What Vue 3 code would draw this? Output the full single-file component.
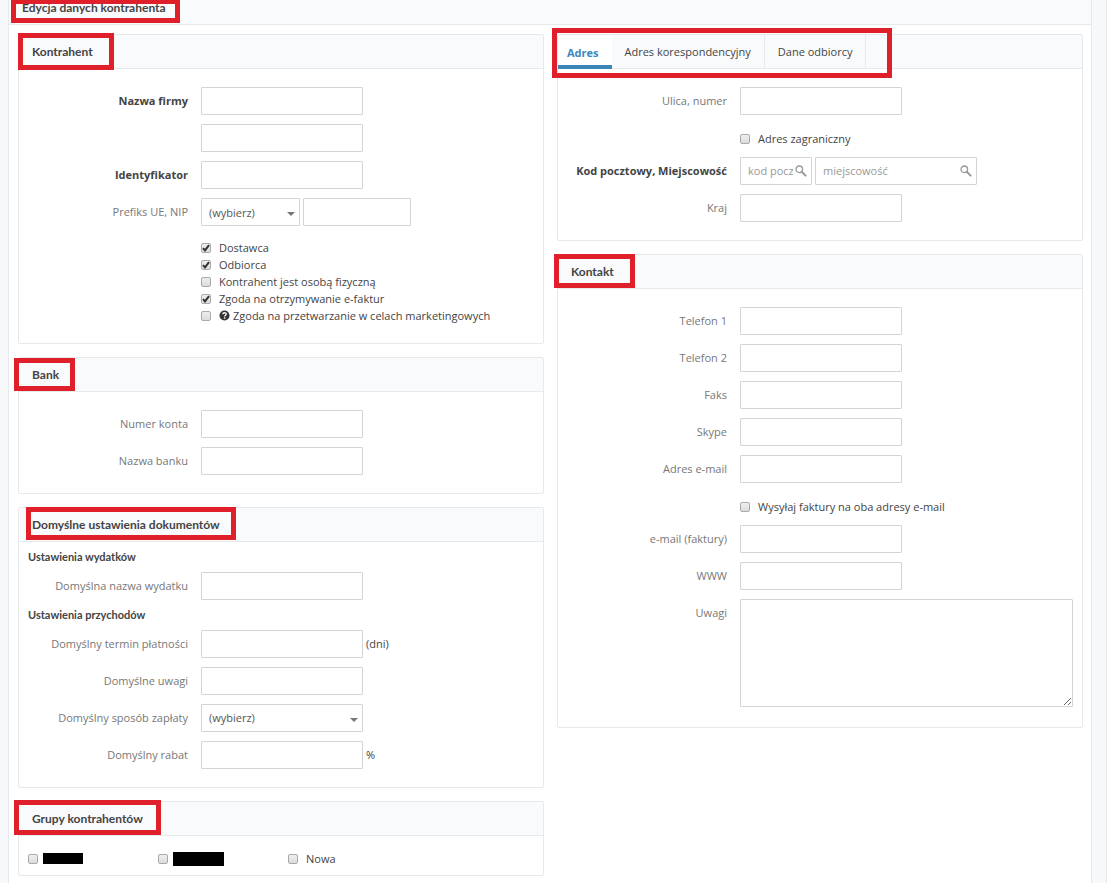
<template>
  <div class="page">
    <main class="window">
      <header class="window-header">
        <h1 class="window-title">Edycja danych kontrahenta</h1>
        <span class="mark mark-title"></span>
      </header>

      <form class="columns" @submit.prevent>
        <div class="column">
          <section class="panel">
            <header class="panel-header">
              <h2>Kontrahent</h2>
              <span class="mark mark-kontrahent"></span>
            </header>
            <div class="panel-body">
              <div class="row">
                <label class="label required" for="name1">Nazwa firmy</label>
                <input id="name1" v-model="form.name1" class="field" type="text">
              </div>
              <div class="row">
                <span class="label"></span>
                <input v-model="form.name2" class="field" type="text" aria-label="Nazwa firmy">
              </div>
              <div class="row">
                <label class="label required" for="identifier">Identyfikator</label>
                <input id="identifier" v-model="form.identifier" class="field" type="text">
              </div>
              <div class="row">
                <label class="label" for="prefix">Prefiks UE, NIP</label>
                <div class="group">
                  <select id="prefix" v-model="form.prefix" class="field select-small">
                    <option value="">(wybierz)</option>
                  </select>
                  <input v-model="form.nip" class="field nip" type="text" aria-label="NIP">
                </div>
              </div>
              <div class="row check-row">
                <span class="label"></span>
                <div class="checks">
                  <label v-for="flag in flags" :key="flag.label" class="check">
                    <input v-model="flag.checked" type="checkbox">
                    <svg v-if="flag.help" class="help" viewBox="0 0 12 12" aria-hidden="true">
                      <circle cx="6" cy="6" r="5.5" fill="#333" />
                      <path d="M4.2 4.6C4.3 2.4 7.9 2.4 7.9 4.5C7.9 5.7 6.1 5.7 6.1 7.1" fill="none" stroke="#fff" stroke-width="1.5" />
                      <rect x="5.3" y="8" width="1.6" height="1.5" fill="#fff" />
                    </svg>
                    <span>{{ flag.label }}</span>
                  </label>
                </div>
              </div>
            </div>
          </section>

          <section class="panel">
            <header class="panel-header">
              <h2>Bank</h2>
              <span class="mark mark-bank"></span>
            </header>
            <div class="panel-body">
              <div class="row">
                <label class="label" for="account">Numer konta</label>
                <input id="account" v-model="form.account" class="field" type="text">
              </div>
              <div class="row">
                <label class="label" for="bank">Nazwa banku</label>
                <input id="bank" v-model="form.bank" class="field" type="text">
              </div>
            </div>
          </section>

          <section class="panel">
            <header class="panel-header">
              <h2>Domyślne ustawienia dokumentów</h2>
              <span class="mark mark-defaults"></span>
            </header>
            <h3>Ustawienia wydatków</h3>
            <div class="row">
              <label class="label" for="expense">Domyślna nazwa wydatku</label>
              <input id="expense" v-model="form.expense" class="field" type="text">
            </div>
            <h3>Ustawienia przychodów</h3>
            <div class="panel-body no-top">
              <div class="row">
                <label class="label" for="term">Domyślny termin płatności</label>
                <div class="group">
                  <input id="term" v-model="form.term" class="field" type="text">
                  <span>(dni)</span>
                </div>
              </div>
              <div class="row">
                <label class="label" for="defaultNotes">Domyślne uwagi</label>
                <input id="defaultNotes" v-model="form.defaultNotes" class="field" type="text">
              </div>
              <div class="row">
                <label class="label" for="payment">Domyślny sposób zapłaty</label>
                <select id="payment" v-model="form.payment" class="field">
                  <option value="">(wybierz)</option>
                </select>
              </div>
              <div class="row">
                <label class="label" for="discount">Domyślny rabat</label>
                <div class="group">
                  <input id="discount" v-model="form.discount" class="field" type="text">
                  <span>%</span>
                </div>
              </div>
            </div>
          </section>

          <section class="panel">
            <header class="panel-header">
              <h2>Grupy kontrahentów</h2>
              <span class="mark mark-groups"></span>
            </header>
            <div class="groups">
              <label class="check hidden-name">
                <input v-model="groups" type="checkbox" value="1" aria-label="Grupa 1">
                <span class="redacted"></span>
              </label>
              <label class="check hidden-name">
                <input v-model="groups" type="checkbox" value="2" aria-label="Grupa 2">
                <span class="redacted large"></span>
              </label>
              <label class="check">
                <input v-model="groups" type="checkbox" value="3">
                <span>Nowa</span>
              </label>
            </div>
          </section>
        </div>

        <div class="column">
          <section class="panel">
            <header class="panel-header tabs">
              <button
                v-for="tab in tabs"
                :key="tab"
                type="button"
                class="tab"
                :class="{ active: tab === activeTab }"
                @click="activeTab = tab"
              >{{ tab }}</button>
              <span class="mark mark-tabs"></span>
            </header>
            <div class="panel-body">
              <div class="row">
                <label class="label" for="street">Ulica, numer</label>
                <input id="street" v-model="form.street" class="field" type="text">
              </div>
              <div class="row single-check">
                <span class="label"></span>
                <label class="check">
                  <input v-model="form.foreign" type="checkbox">
                  <span>Adres zagraniczny</span>
                </label>
              </div>
              <div class="row">
                <label class="label required" for="zip">Kod pocztowy, Miejscowość</label>
                <div class="group">
                  <div v-for="item in lookups" :key="item.id" class="lookup">
                    <input
                      :id="item.id"
                      v-model="form[item.id]"
                      class="field"
                      :class="item.id"
                      type="text"
                      :placeholder="item.placeholder"
                      :aria-label="item.name"
                    >
                    <svg class="search" viewBox="0 0 12 12" aria-hidden="true">
                      <circle cx="4.3" cy="4.3" r="3.3" fill="none" stroke="#999" stroke-width="1.3" />
                      <path d="M6.8 6.8L10.6 10.6" stroke="#999" stroke-width="2" stroke-linecap="round" />
                    </svg>
                  </div>
                </div>
              </div>
              <div class="row">
                <label class="label" for="country">Kraj</label>
                <input id="country" v-model="form.country" class="field" type="text">
              </div>
            </div>
          </section>

          <section class="panel">
            <header class="panel-header">
              <h2>Kontakt</h2>
              <span class="mark mark-contact"></span>
            </header>
            <div class="panel-body">
              <div v-for="item in contacts" :key="item.id" class="row">
                <label class="label" :for="item.id">{{ item.label }}</label>
                <input :id="item.id" v-model="form[item.id]" class="field" type="text">
              </div>
              <div class="row single-check">
                <span class="label"></span>
                <label class="check">
                  <input v-model="form.sendBoth" type="checkbox">
                  <span>Wysyłaj faktury na oba adresy e-mail</span>
                </label>
              </div>
              <div class="row">
                <label class="label" for="invoiceEmail">e-mail (faktury)</label>
                <input id="invoiceEmail" v-model="form.invoiceEmail" class="field" type="text">
              </div>
              <div class="row">
                <label class="label" for="www">WWW</label>
                <input id="www" v-model="form.www" class="field" type="text">
              </div>
              <div class="row">
                <label class="label" for="notes">Uwagi</label>
                <textarea id="notes" v-model="form.notes" class="field notes"></textarea>
              </div>
            </div>
          </section>
        </div>
      </form>
    </main>
  </div>
</template>

<script setup>
import { reactive, ref } from 'vue';

const tabs = ['Adres', 'Adres korespondencyjny', 'Dane odbiorcy'];
const activeTab = ref('Adres');
const groups = ref([]);

const form = reactive({
  prefix: '',
  payment: '',
  foreign: false,
  sendBoth: false
});

const flags = reactive([
  { label: 'Dostawca', checked: true },
  { label: 'Odbiorca', checked: true },
  { label: 'Kontrahent jest osobą fizyczną', checked: false },
  { label: 'Zgoda na otrzymywanie e-faktur', checked: true },
  { label: 'Zgoda na przetwarzanie w celach marketingowych', checked: false, help: true }
]);

const lookups = [
  { id: 'zip', placeholder: 'kod pocztowy', name: 'Kod pocztowy' },
  { id: 'city', placeholder: 'miejscowość', name: 'Miejscowość' }
];

const contacts = [
  { id: 'phone1', label: 'Telefon 1' },
  { id: 'phone2', label: 'Telefon 2' },
  { id: 'fax', label: 'Faks' },
  { id: 'skype', label: 'Skype' },
  { id: 'email', label: 'Adres e-mail' }
];
</script>

<style>
body {
  margin: 0;
  background: #f6f8fa;
}
</style>

<style scoped>
* {
  box-sizing: border-box;
}
.page {
  min-height: 100vh;
  display: flex;
  padding: 0 14px 0 8px;
  border-right: 1px solid #e7eaec;
  font-family: "Open Sans", sans-serif;
  font-size: 11px;
  line-height: 17px;
  color: #444;
}
.window {
  flex: 1;
  min-width: 0;
  background: #fff;
  border: solid #e7eaec;
  border-width: 0 1px;
}
.window-header {
  position: relative;
  height: 25px;
  padding-left: 13px;
  background: #f9fafc;
  border-bottom: 1px solid #e7eaec;
}
h1, h2, h3 {
  margin: 0;
  font-family: Lato, "Open Sans", sans-serif;
  font-size: 12px;
  font-weight: 700;
  color: #444;
}
.window-title {
  line-height: 16px;
}
.columns {
  display: grid;
  grid-template-columns: 1fr 1fr;
  gap: 13px;
  padding: 9px 8px 7px 9px;
}
.column {
  min-width: 0;
  display: flex;
  flex-direction: column;
  gap: 13px;
}
.panel {
  border: 1px solid #e7eaec;
  border-radius: 2px;
}
.panel-header {
  position: relative;
  height: 34px;
  background: #f9fafc;
  border-bottom: 1px solid #e7eaec;
}
h2 {
  padding-left: 13px;
  line-height: 33px;
}
h3 {
  padding-left: 9px;
  font-size: 11px;
  line-height: 30px;
}
.panel-body {
  display: flex;
  flex-direction: column;
  gap: 9px;
  padding: 18px 0;
}
.panel-body.no-top {
  padding-top: 0;
}
.row {
  display: flex;
  gap: 13px;
  padding-right: 9px;
}
.label {
  flex: 0 0 169px;
  line-height: 28px;
  text-align: right;
  color: #777;
}
.label.required {
  font-weight: 700;
  color: #444;
}
.field {
  display: block;
  width: 162px;
  height: 28px;
  margin: 0;
  padding: 0 7px;
  border: 1px solid #d2d4d6;
  border-radius: 1px;
  background: #fff;
  font: inherit;
  color: #555;
  outline: none;
}
.field:focus {
  border-color: #3a87c0;
}
.field::placeholder {
  color: #999;
  opacity: 1;
}
select.field {
  appearance: none;
  padding-bottom: 2px;
  background: #fff url("data:image/svg+xml,%3Csvg xmlns='http://www.w3.org/2000/svg' width='8' height='4'%3E%3Cpath d='M0 0h8L4 4z' fill='%23777'/%3E%3C/svg%3E") no-repeat right 4px top 13px;
}
.group {
  display: flex;
  gap: 3px;
  line-height: 28px;
}
.field.select-small {
  width: 99px;
}
.field.nip {
  width: 108px;
}
.lookup {
  position: relative;
}
.lookup .field {
  padding-right: 18px;
}
.field.zip {
  width: 72px;
}
.search {
  position: absolute;
  top: 8px;
  right: 5px;
  width: 12px;
  height: 12px;
}
.field.notes {
  flex: 1;
  width: auto;
  height: 108px;
  margin-bottom: 2px;
  resize: vertical;
}
.check-row {
  margin-top: 4px;
  padding-bottom: 1px;
}
.check-row .label,
.single-check .label {
  line-height: 17px;
}
.single-check {
  margin-top: 6px;
  height: 18px;
}
.check {
  display: flex;
  align-items: center;
  height: 17px;
}
.check input {
  appearance: none;
  width: 10px;
  height: 10px;
  margin: 0 8px 0 0;
  border: 1px solid #aaa;
  border-radius: 2px;
  background: linear-gradient(#eee, #dcdcdc);
}
.check input:checked {
  background: url("data:image/svg+xml,%3Csvg xmlns='http://www.w3.org/2000/svg' viewBox='0 0 8 8'%3E%3Cpath d='M1 4.2l2 2.2L7 1.2' fill='none' stroke='%23333' stroke-width='2'/%3E%3C/svg%3E"), linear-gradient(#eee, #dcdcdc);
}
.help {
  width: 11px;
  height: 11px;
  margin-right: 3px;
}
.groups {
  display: grid;
  grid-template-columns: repeat(4, 130px);
  padding: 14px 0 8px 9px;
}
.hidden-name input {
  margin-right: 5px;
}
.redacted {
  width: 40px;
  height: 11px;
  background: #000;
}
.redacted.large {
  width: 51px;
  height: 14px;
}
.tabs {
  display: flex;
}
.tab {
  height: 33px;
  padding: 0 13px;
  border: 0;
  border-right: 1px solid #e7eaec;
  background: none;
  font: inherit;
  color: #444;
  cursor: pointer;
}
.tab:first-child {
  padding-left: 9px;
}
.tab.active {
  height: 34px;
  background: #fff;
  border-bottom: 4px solid #3a87b7;
  border-right: 0;
  padding-top: 4px;
  font-weight: 700;
  color: #3a87c0;
}

/* red frames drawn over the headings */
.mark {
  position: absolute;
  border: 5px solid #df1f2a;
  pointer-events: none;
}
.mark-title {
  left: 2px;
  top: -1px;
  width: 169px;
  height: 24px;
}
.mark-kontrahent {
  left: -1px;
  top: -2px;
  width: 96px;
  height: 37px;
}
.mark-bank {
  left: -5px;
  top: 0;
  width: 61px;
  height: 33px;
}
.mark-defaults {
  left: 7px;
  top: -1px;
  width: 210px;
  height: 33px;
}
.mark-groups {
  left: -5px;
  top: -2px;
  width: 147px;
  height: 35px;
}
.mark-tabs {
  left: -6px;
  top: -7px;
  width: 340px;
  height: 50px;
}
.mark-contact {
  left: -4px;
  top: -1px;
  width: 81px;
  height: 34px;
}
</style>
